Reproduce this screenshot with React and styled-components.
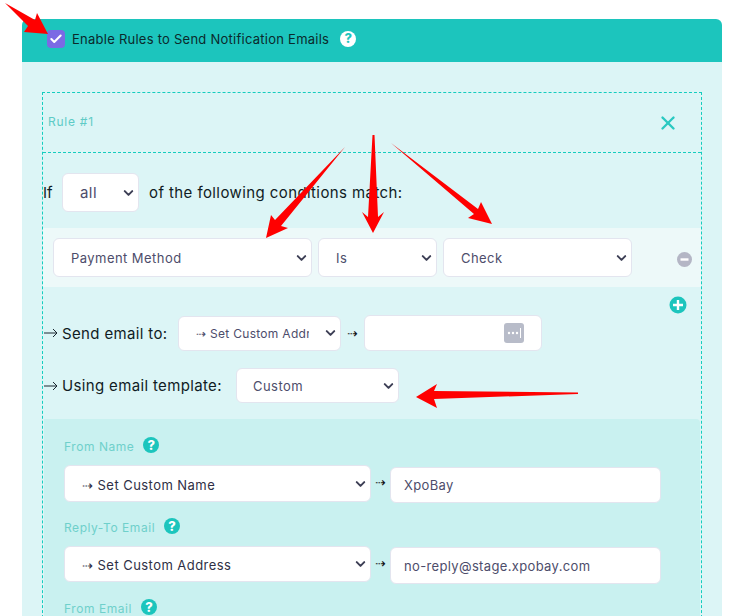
import React from 'react'
import styled, { createGlobalStyle } from 'styled-components'
import { Check, X, ChevronDown } from 'lucide-react'

const GlobalStyle = createGlobalStyle`
  html, body {
    margin: 0;
    height: 616px;
    overflow: hidden;
    background: #fff;
    font-family: Inter, "Open Sans", sans-serif;
  }
`

const Page = styled.div`
  position: relative;
  width: 736px;
  height: 616px;
  overflow: hidden;
  padding: 19px 14px 0 22px;
  box-sizing: border-box;
`

const Header = styled.div`
  display: flex;
  align-items: center;
  box-sizing: border-box;
  height: 43px;
  padding: 0 0 4px 25px;
  background: #1cc5bd;
  border-radius: 6px 6px 0 0;
`

const CheckBox = styled.span`
  display: flex;
  align-items: center;
  justify-content: center;
  width: 18px;
  height: 18px;
  border-radius: 4px;
  background: #7b6ae4;
  color: #fff;
`

const HeaderLabel = styled.span`
  margin: 0 11px 0 7px;
  font-size: 13px;
  letter-spacing: 0.25px;
  color: #0b2a2c;
`

const Help = styled.span`
  display: flex;
  align-items: center;
  justify-content: center;
  flex: none;
  width: 16px;
  height: 16px;
  border-radius: 50%;
  background: ${p => (p.$light ? '#fff' : '#1cc5bd')};
  color: ${p => (p.$light ? '#1cc5bd' : '#fff')};
  font-size: 13px;
  font-weight: 800;
  line-height: 1;
`

const Body = styled.div`
  height: 560px;
  padding: 30px 20px 0;
  background: #dcf5f6;
`

const RuleBox = styled.div`
  border: 1px dashed #14cdbf;
  border-bottom: 0;
  height: 540px;
`

const RuleHead = styled.div`
  display: flex;
  align-items: center;
  justify-content: space-between;
  height: 59px;
  padding: 0 22px 0 5px;
  border-bottom: 1px dashed #14cdbf;
`

const RuleTitle = styled.span`
  font-size: 12px;
  letter-spacing: 0.75px;
  color: #5ecbc6;
  margin-top: -3px;
`

const CloseIcon = styled(X)`
  color: #2ac9c1;
`

const MatchRow = styled.div`
  display: flex;
  align-items: center;
  height: 39px;
  padding: 20px 0 16px;
  font-size: 15px;
  color: #101c24;
`

const IfWord = styled.span`
  width: 19px;
`

const MatchText = styled.span`
  margin-left: 10px;
  letter-spacing: 0.41px;
`

const ConditionRow = styled.div`
  display: flex;
  gap: 6px;
  height: 39px;
  padding: 10px;
  background: #edf9f9;
`

const SelectWrap = styled.div`
  position: relative;
  flex: none;
  width: ${p => p.$w}px;
  height: ${p => p.$h || 39}px;
`

const Select = styled.select`
  appearance: none;
  display: block;
  box-sizing: border-box;
  width: 100%;
  height: 100%;
  padding: ${p => p.$padTop || 0}px ${p => p.$padRight || 30}px 0 ${p => p.$padLeft || 17}px;
  border: 1px solid #e3e5ef;
  border-radius: 6px;
  background: #fff;
  font: ${p => p.$size || 13}px Inter, sans-serif;
  letter-spacing: ${p => (p.$size === 12 ? 0.3 : 0.45)}px;
  color: ${p => (p.$dark ? '#2f2f45' : '#4d4d6b')};
  outline: none;
`

const Chevron = styled(ChevronDown)`
  position: absolute;
  top: 50%;
  right: 3px;
  transform: translateY(-50%);
  color: #3d3f55;
  pointer-events: none;
`

const RoundButton = styled.svg`
  display: block;
  flex: none;
`

const MinusSlot = styled.div`
  margin: 14px 0 0 39px;
`

const PlusRow = styled.div`
  display: flex;
  justify-content: flex-end;
  height: 18px;
  padding: 9px 14px 1px 0;
`

const ActionRow = styled.div`
  display: flex;
  align-items: center;
  height: ${p => p.$h}px;
  margin-bottom: ${p => p.$mb}px;
  padding-left: 1px;
  font-size: 15px;
  letter-spacing: 0.35px;
  color: #101c24;
`

const ActionLabel = styled.span`
  flex: none;
  display: flex;
  align-items: center;
  gap: 4px;
  width: ${p => p.$w}px;
  white-space: nowrap;
`

const ThinArrow = styled.svg`
  display: block;
  flex: none;
`

const Link = styled.span`
  flex: none;
  width: ${p => p.$w || 23}px;
  text-align: center;
  font: 13px "DejaVu Sans", sans-serif;
  color: #111;
`

const FieldLink = styled(Link)`
  line-height: 36px;
`

const InputWrap = styled.div`
  position: relative;
  flex: none;
  width: ${p => p.$w}px;
  height: ${p => p.$h || 36}px;
  margin-top: ${p => p.$mt || 0}px;
`

const TextInput = styled.input`
  display: block;
  box-sizing: border-box;
  width: 100%;
  height: 100%;
  padding: 0 13px;
  border: 1px solid #e3e5ef;
  border-radius: 6px;
  background: #fff;
  font: 13px Inter, sans-serif;
  letter-spacing: 0.35px;
  color: #4d4d6b;
  outline: none;
`

const KeyIcon = styled.svg`
  position: absolute;
  top: 8px;
  right: 18px;
`

const Panel = styled.div`
  height: 200px;
  margin: 0 1px;
  padding: 16px 39px 0 20px;
  background: #c9f1f0;
  border-radius: 0 4px 0 0;
`

const LabelRow = styled.div`
  display: flex;
  align-items: flex-start;
  gap: 9px;
  height: 20px;
  margin-bottom: 10px;
  padding-top: 1px;
  box-sizing: border-box;
`

const FieldLabel = styled.span`
  font-size: 12px;
  line-height: 22px;
  letter-spacing: 0.55px;
  color: #6fd0cb;
`

const FieldHelp = styled(Help)`
  margin-top: 1px;
`

const FieldRow = styled.div`
  display: flex;
  align-items: flex-start;
  height: 38px;
  margin-bottom: 13px;
`

const Annotation = styled.svg`
  position: absolute;
  top: 0;
  left: 0;
  pointer-events: none;
`

const arrows = [
  '5,3 35,20 37,13 48,34 24,32 28,26',
  '345,147 275,220 271,215 266,238 288,228 281,226',
  '372.5,135 374.5,135 378,217 384,212 373,233 362,212 368,217',
  '391,143 478,209 481,202 492,224 468,218 474,214',
  '578,392.5 434,391 437,384 416,397 437,408 434,399 578,394',
]

function Dropdown({ w, h, value, padLeft, padRight, padTop, dark, size }) {
  return (
    <SelectWrap $w={w} $h={h}>
      <Select defaultValue={value} $padLeft={padLeft} $padRight={padRight} $padTop={padTop} $dark={dark} $size={size}>
        <option>{value}</option>
      </Select>
      <Chevron size={15} strokeWidth={3.2} />
    </SelectWrap>
  )
}

function FieldLabelRow({ label }) {
  return (
    <LabelRow>
      <FieldLabel>{label}</FieldLabel>
      <FieldHelp>?</FieldHelp>
    </LabelRow>
  )
}

function LabelArrow() {
  return (
    <ThinArrow width="14" height="10" viewBox="0 0 14 10">
      <path d="M0 5h13M9 1l4 4-4 4" fill="none" stroke="#1a2630" strokeWidth="1" />
    </ThinArrow>
  )
}

export default function App() {
  return (
    <Page>
      <GlobalStyle />
      <Header>
        <CheckBox><Check size={14} strokeWidth={3.5} /></CheckBox>
        <HeaderLabel>Enable Rules to Send Notification Emails</HeaderLabel>
        <Help $light>?</Help>
      </Header>
      <Body>
        <RuleBox>
          <RuleHead>
            <RuleTitle>Rule #1</RuleTitle>
            <CloseIcon size={22} strokeWidth={2.6} />
          </RuleHead>
          <MatchRow>
            <IfWord>If</IfWord>
            <Dropdown w={77} value="all" size={15} />
            <MatchText>of the following conditions match:</MatchText>
          </MatchRow>
          <ConditionRow>
            <Dropdown w={259} value="Payment Method" />
            <Dropdown w={119} value="Is" />
            <Dropdown w={189} value="Check" />
            <MinusSlot>
              <RoundButton width="15" height="15" viewBox="0 0 15 15">
                <circle cx="7.5" cy="7.5" r="7.5" fill="#b4b6c5" />
                <rect x="3.5" y="6.3" width="8" height="2.4" fill="#fff" />
              </RoundButton>
            </MinusSlot>
          </ConditionRow>
          <PlusRow>
            <RoundButton width="18" height="18" viewBox="0 0 18 18">
              <circle cx="9" cy="9" r="8.5" fill="#1cc5bd" />
              <path d="M9 4v10M4 9h10" stroke="#fff" strokeWidth="2.4" />
            </RoundButton>
          </PlusRow>
          <ActionRow $h={36} $mb={17}>
            <ActionLabel $w={134}><LabelArrow />Send email to:</ActionLabel>
            <Dropdown w={163} h={35} value="⇢ Set Custom Address" padRight={31} size={12} />
            <Link $w={23}>⇢</Link>
            <InputWrap $w={178}>
              <TextInput />
              <KeyIcon width="20" height="20" viewBox="0 0 20 20">
                <rect width="20" height="20" rx="3" fill="#b8bcc9" />
                <circle cx="5" cy="10" r="1.2" fill="#fff" />
                <circle cx="9" cy="10" r="1.2" fill="#fff" />
                <circle cx="13" cy="10" r="1.2" fill="#fff" />
                <rect x="16" y="5" width="1" height="10" fill="#fff" />
              </KeyIcon>
            </InputWrap>
          </ActionRow>
          <ActionRow $h={35} $mb={16}>
            <ActionLabel $w={192}><LabelArrow />Using email template:</ActionLabel>
            <Dropdown w={163} h={35} value="Custom" padLeft={16} />
          </ActionRow>
          <Panel>
            <FieldLabelRow label="From Name" />
            <FieldRow>
              <Dropdown w={307} h={37} value="⇢ Set Custom Name" padTop={2} dark />
              <FieldLink $w={19}>⇢</FieldLink>
              <InputWrap $w={271} $mt={2}><TextInput defaultValue="XpoBay" /></InputWrap>
            </FieldRow>
            <FieldLabelRow label="Reply-To Email" />
            <FieldRow>
              <Dropdown w={307} h={36} value="⇢ Set Custom Address" padTop={2} dark />
              <FieldLink $w={19}>⇢</FieldLink>
              <InputWrap $w={271} $h={37} $mt={1}><TextInput defaultValue="no-reply@stage.xpobay.com" /></InputWrap>
            </FieldRow>
            <FieldLabelRow label="From Email" />
          </Panel>
        </RuleBox>
      </Body>
      <Annotation width="736" height="616" viewBox="0 0 736 616">
        {arrows.map(points => <polygon key={points} points={points} fill="#ff0000" />)}
      </Annotation>
    </Page>
  )
}
